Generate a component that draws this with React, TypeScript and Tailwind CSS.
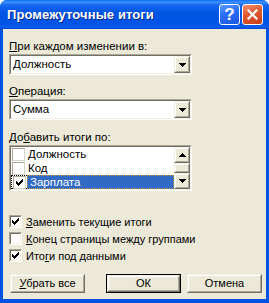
import React from "react";

function Arrow({ up = false }: { up?: boolean }) {
  return (
    <svg width="7" height="4" viewBox="0 0 7 4" shapeRendering="crispEdges" className={up ? "rotate-180" : ""}>
      <path d="M0 0h7v1H0zM1 1h5v1H1zM2 2h3v1H2zM3 3h1v1H3z" fill="#000" />
    </svg>
  );
}

function Check() {
  return (
    <svg width="7" height="7" viewBox="0 0 7 7" shapeRendering="crispEdges">
      <path
        d="M6 0h1v1H6zM5 1h2v1H5zM0 2h1v1H0zM4 2h3v1H4zM0 3h2v1H0zM3 3h3v1H3zM0 4h5v1H0zM1 5h3v1H1zM2 6h1v1H2z"
        fill="#000"
      />
    </svg>
  );
}

function RaisedBox({ className, children }: { className: string; children?: React.ReactNode }) {
  return (
    <div className={"border border-t-[#f1efe2] border-l-[#f1efe2] border-r-[#716f64] border-b-[#716f64] " + className}>
      <div className="w-full h-full border border-t-white border-l-white border-r-[#aca899] border-b-[#aca899] bg-[#ece9d8] flex items-center justify-center">
        {children}
      </div>
    </div>
  );
}

function Combo({ value }: { value: string }) {
  return (
    <div className="w-[183px] h-[21px] border border-t-[#aca899] border-l-[#aca899] border-r-white border-b-white">
      <div className="w-full h-full border border-t-[#716f64] border-l-[#716f64] border-r-[#f1efe2] border-b-[#f1efe2] bg-white flex items-center">
        <span className="flex-1 pl-[2px] leading-[15px] text-[11.5px]">{value}</span>
        <RaisedBox className="w-[16px] h-[17px]">
          <Arrow />
        </RaisedBox>
      </div>
    </div>
  );
}

function ListCheck({ checked }: { checked?: boolean }) {
  return (
    <div className="w-[13px] h-[13px] border border-t-[#aca899] border-l-[#aca899] border-r-[#d8d5c8] border-b-[#d8d5c8] bg-white flex items-center justify-center">
      {checked ? <Check /> : null}
    </div>
  );
}

function DlgCheck({ checked }: { checked?: boolean }) {
  return (
    <div className="w-[13px] h-[13px] border border-t-[#aca899] border-l-[#aca899] border-r-white border-b-white">
      <div className="w-full h-full border border-t-[#716f64] border-l-[#716f64] border-r-[#f1efe2] border-b-[#f1efe2] bg-white flex items-center justify-center">
        {checked ? <Check /> : null}
      </div>
    </div>
  );
}

export default function App() {
  return (
    <div className="w-[269px] h-[303px] bg-white font-['Liberation_Sans',Arial,sans-serif] text-[11px] text-black">
      <div className="w-full h-full flex flex-col rounded-t-[7px] overflow-hidden bg-[#0053e3]">
        {/* Title bar */}
        <div className="h-[29px] shrink-0 flex items-center pl-[7px] pr-[6px] bg-[linear-gradient(180deg,#0a6cf5_0%,#3d92ff_7%,#1667f0_18%,#0054e3_45%,#0055e8_85%,#0a5ef0_93%,#0046d6_100%)]">
          <span className="flex-1 text-white font-bold text-[13px] leading-none tracking-[0.1px] [text-shadow:1px_1px_0_#0a2a8a]">
            Промежуточные итоги
          </span>
          <div className="w-[21px] h-[21px] rounded-[3px] border border-white bg-[linear-gradient(160deg,#5b9bff_0%,#2a6cf5_45%,#1b57e0_100%)] flex items-center justify-center text-white font-bold text-[17px] leading-none">
            ?
          </div>
          <div className="ml-[2px] w-[21px] h-[21px] rounded-[3px] border border-white bg-[linear-gradient(160deg,#f0926e_0%,#e0582e_45%,#c8401a_100%)] flex items-center justify-center">
            <svg width="11" height="11" viewBox="0 0 11 11">
              <path d="M1.5 1.5L9.5 9.5M9.5 1.5L1.5 9.5" stroke="#fff" strokeWidth="2.2" strokeLinecap="square" />
            </svg>
          </div>
        </div>

        {/* Body */}
        <div className="flex-1 mx-[3px] mb-[4px] bg-[#ece9d8] flex flex-col pl-[6px] pt-[10px]">
          <div className="h-[14px] leading-[14px] text-[11.5px]">
            <span className="underline">П</span>ри каждом изменении в:
          </div>
          <div className="mt-[1px]">
            <Combo value="Должность" />
          </div>

          <div className="mt-[9px] h-[14px] leading-[14px] text-[11.5px]">
            <span className="underline">О</span>перация:
          </div>
          <div className="mt-[1px]">
            <Combo value="Сумма" />
          </div>

          <div className="mt-[10px] h-[14px] leading-[14px] text-[11.5px]">
            До<span className="underline">б</span>авить итоги по:
          </div>

          {/* List box */}
          <div className="mt-[1px] w-[183px] h-[46px] border border-t-[#aca899] border-l-[#aca899] border-r-white border-b-white">
            <div className="w-full h-full border border-t-[#716f64] border-l-[#716f64] border-r-[#f1efe2] border-b-[#f1efe2] bg-white flex">
              <div className="flex-1 flex flex-col">
                <div className="h-[14px] flex items-center pl-[1px]">
                  <ListCheck />
                  <span className="pl-[3px] leading-[14px] text-[11.5px]">Должность</span>
                </div>
                <div className="h-[14px] flex items-center pl-[1px]">
                  <ListCheck />
                  <span className="pl-[3px] leading-[14px] text-[11.5px]">Код</span>
                </div>
                <div className="h-[14px] flex items-center">
                  <div className="h-[14px] flex items-center pl-[1px] pr-[1px] border border-dotted border-black border-r-0">
                    <ListCheck checked />
                  </div>
                  <div className="flex-1 h-[14px] bg-[#316ac5] text-white pl-[2px] border border-dotted border-[#cf953a] flex items-center">
                    <span className="leading-[12px] text-[11.5px]">Зарплата</span>
                  </div>
                </div>
              </div>
              {/* Scrollbar */}
              <div className="w-[16px] flex flex-col">
                <RaisedBox className="w-[16px] h-[16px]">
                  <Arrow up />
                </RaisedBox>
                <RaisedBox className="w-[16px] h-[10px]" />
                <RaisedBox className="w-[16px] h-[16px]">
                  <Arrow />
                </RaisedBox>
              </div>
            </div>
          </div>

          {/* Checkboxes */}
          <div className="mt-[22px] flex flex-col text-[11px]">
            <div className="h-[17px] flex items-center">
              <DlgCheck checked />
              <span className="pl-[4px] leading-[14px]">
                <span className="underline">З</span>аменить текущие итоги
              </span>
            </div>
            <div className="h-[17px] flex items-center">
              <DlgCheck />
              <span className="pl-[4px] leading-[14px]">
                <span className="underline">К</span>онец страницы между группами
              </span>
            </div>
            <div className="h-[17px] flex items-center">
              <DlgCheck checked />
              <span className="pl-[4px] leading-[14px]">
                Ито<span className="underline">г</span>и под данными
              </span>
            </div>
          </div>

          {/* Buttons */}
          <div className="mt-[10px] flex pl-[1px] text-[11px]">
            <RaisedBox className="w-[75px] h-[19px]">
              <span>
                <span className="underline">У</span>брать все
              </span>
            </RaisedBox>
            <div className="ml-[21px] w-[75px] h-[19px] border border-black">
              <RaisedBox className="w-full h-full">
                <span>ОК</span>
              </RaisedBox>
            </div>
            <RaisedBox className="ml-[6px] w-[75px] h-[19px]">
              <span>Отмена</span>
            </RaisedBox>
          </div>
        </div>
      </div>
    </div>
  );
}
